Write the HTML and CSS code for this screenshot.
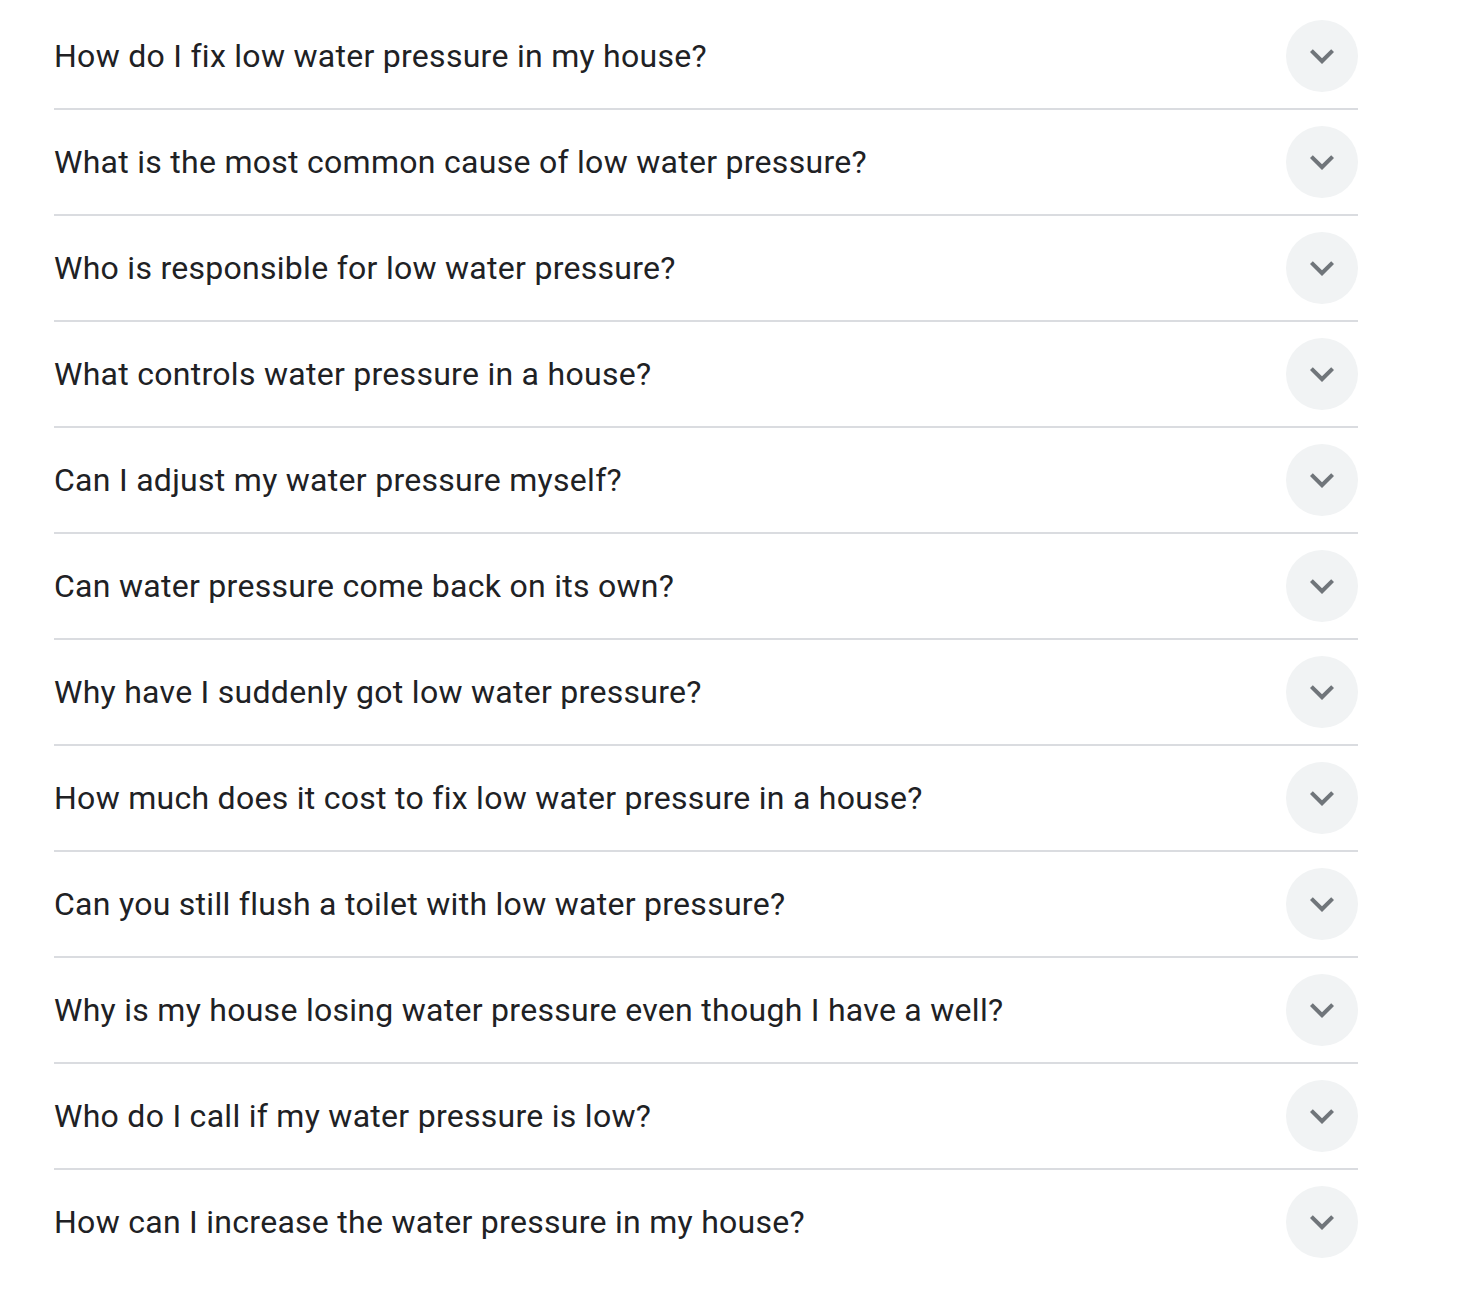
FILE: index.html
```html
<!DOCTYPE html>
<html lang="en">
<head>
<meta charset="utf-8">
<title>People also ask</title>
<link rel="stylesheet" href="styles.css">
</head>
<body>
<div class="faq">
  <div class="faq-row"><span class="faq-q">How do I fix low water pressure in my house?</span><span class="faq-btn"><svg viewBox="0 0 24 24"><path d="M16.59 8.59L12 13.17 7.41 8.59 6 10l6 6 6-6z"/></svg></span></div>
  <div class="faq-row"><span class="faq-q">What is the most common cause of low water pressure?</span><span class="faq-btn"><svg viewBox="0 0 24 24"><path d="M16.59 8.59L12 13.17 7.41 8.59 6 10l6 6 6-6z"/></svg></span></div>
  <div class="faq-row"><span class="faq-q">Who is responsible for low water pressure?</span><span class="faq-btn"><svg viewBox="0 0 24 24"><path d="M16.59 8.59L12 13.17 7.41 8.59 6 10l6 6 6-6z"/></svg></span></div>
  <div class="faq-row"><span class="faq-q">What controls water pressure in a house?</span><span class="faq-btn"><svg viewBox="0 0 24 24"><path d="M16.59 8.59L12 13.17 7.41 8.59 6 10l6 6 6-6z"/></svg></span></div>
  <div class="faq-row"><span class="faq-q">Can I adjust my water pressure myself?</span><span class="faq-btn"><svg viewBox="0 0 24 24"><path d="M16.59 8.59L12 13.17 7.41 8.59 6 10l6 6 6-6z"/></svg></span></div>
  <div class="faq-row"><span class="faq-q">Can water pressure come back on its own?</span><span class="faq-btn"><svg viewBox="0 0 24 24"><path d="M16.59 8.59L12 13.17 7.41 8.59 6 10l6 6 6-6z"/></svg></span></div>
  <div class="faq-row"><span class="faq-q">Why have I suddenly got low water pressure?</span><span class="faq-btn"><svg viewBox="0 0 24 24"><path d="M16.59 8.59L12 13.17 7.41 8.59 6 10l6 6 6-6z"/></svg></span></div>
  <div class="faq-row"><span class="faq-q">How much does it cost to fix low water pressure in a house?</span><span class="faq-btn"><svg viewBox="0 0 24 24"><path d="M16.59 8.59L12 13.17 7.41 8.59 6 10l6 6 6-6z"/></svg></span></div>
  <div class="faq-row"><span class="faq-q">Can you still flush a toilet with low water pressure?</span><span class="faq-btn"><svg viewBox="0 0 24 24"><path d="M16.59 8.59L12 13.17 7.41 8.59 6 10l6 6 6-6z"/></svg></span></div>
  <div class="faq-row"><span class="faq-q">Why is my house losing water pressure even though I have a well?</span><span class="faq-btn"><svg viewBox="0 0 24 24"><path d="M16.59 8.59L12 13.17 7.41 8.59 6 10l6 6 6-6z"/></svg></span></div>
  <div class="faq-row"><span class="faq-q">Who do I call if my water pressure is low?</span><span class="faq-btn"><svg viewBox="0 0 24 24"><path d="M16.59 8.59L12 13.17 7.41 8.59 6 10l6 6 6-6z"/></svg></span></div>
  <div class="faq-row"><span class="faq-q">How can I increase the water pressure in my house?</span><span class="faq-btn"><svg viewBox="0 0 24 24"><path d="M16.59 8.59L12 13.17 7.41 8.59 6 10l6 6 6-6z"/></svg></span></div>
</div>
</body>
</html>
```
FILE: styles.css
```css
html, body {
  margin: 0;
  background: #fff;
}

body {
  padding: 4px 0 0 54px;
  font-family: Roboto, "Liberation Sans", sans-serif;
  color: #202124;
}

.faq {
  width: 1304px;
}

.faq-row {
  display: flex;
  align-items: center;
  justify-content: space-between;
  height: 104px;
  border-bottom: 2px solid #dadce0;
}

.faq-row:last-child {
  border-bottom: none;
}

.faq-q {
  font-size: 32px;
  line-height: 40px;
  letter-spacing: 0.28px;
}

.faq-btn {
  display: flex;
  align-items: center;
  justify-content: center;
  width: 72px;
  height: 72px;
  border-radius: 50%;
  background: #f1f3f4;
}

.faq-btn svg {
  width: 48px;
  height: 48px;
  fill: #70757a;
}
```
